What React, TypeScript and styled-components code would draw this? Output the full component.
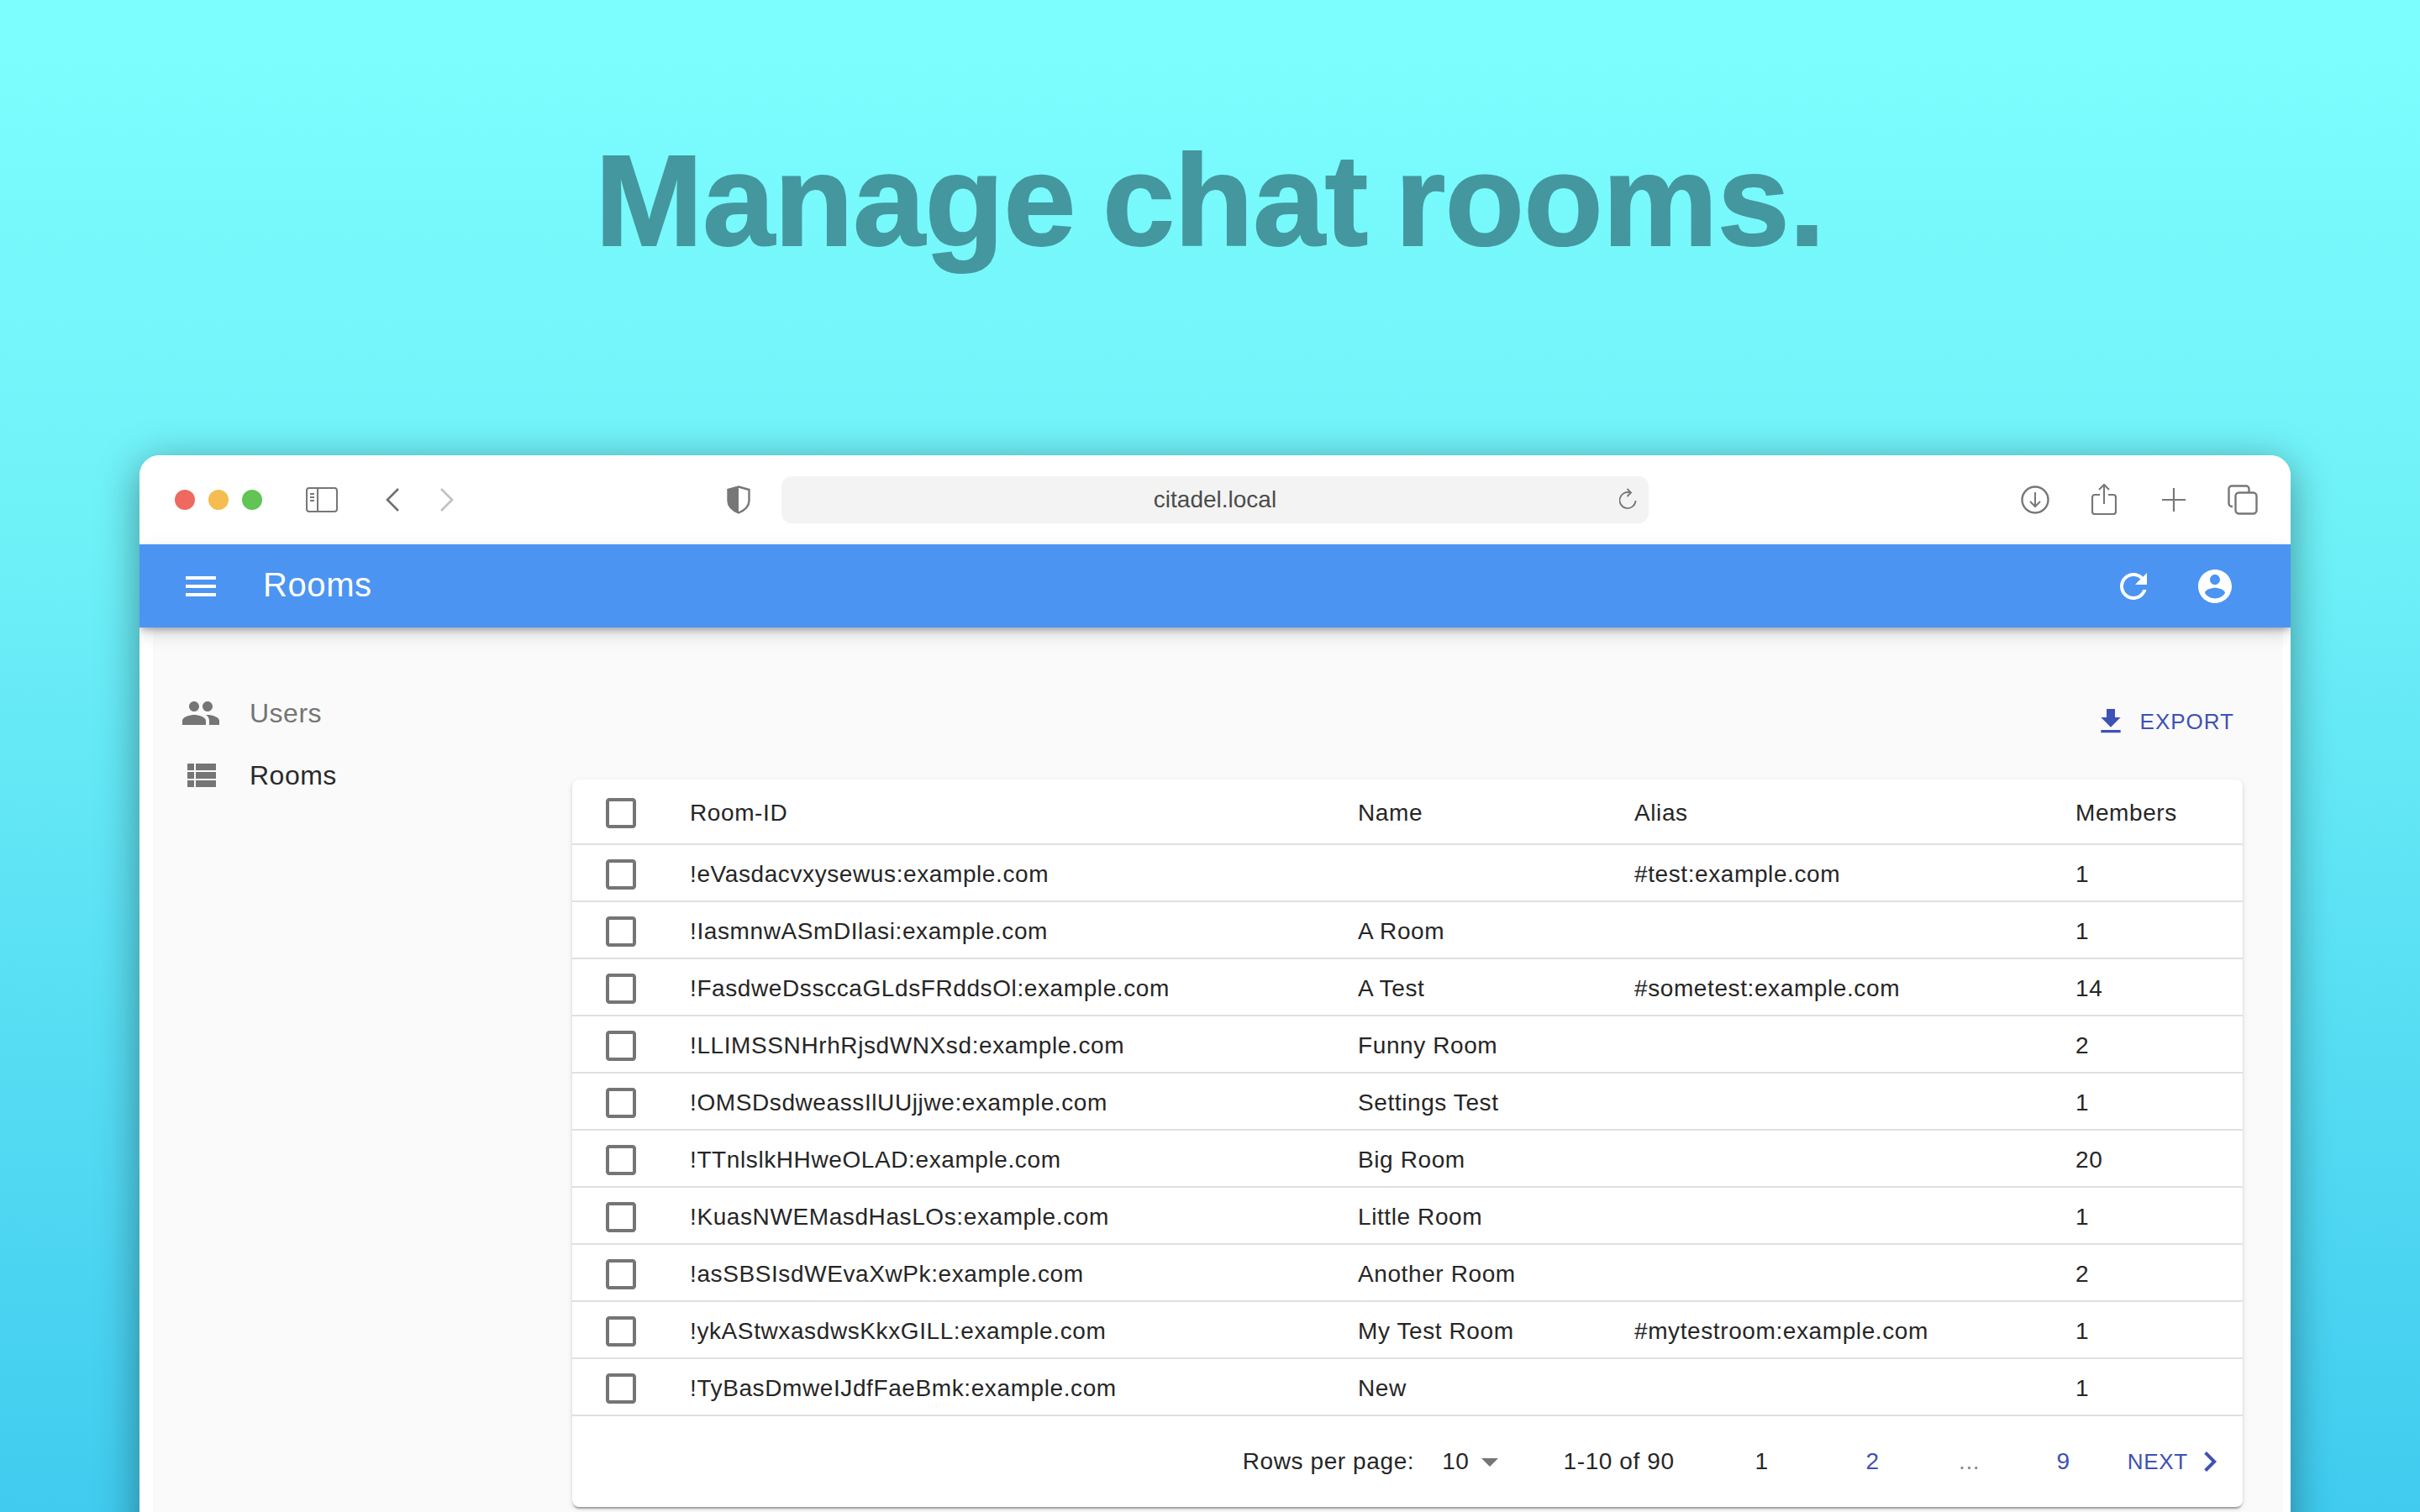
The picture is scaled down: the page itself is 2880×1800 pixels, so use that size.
import React from 'react';
import styled, { createGlobalStyle } from 'styled-components';

const rooms = [
	['!eVasdacvxysewus:example.com', '', '#test:example.com', '1'],
	['!IasmnwASmDIlasi:example.com', 'A Room', '', '1'],
	['!FasdweDssccaGLdsFRddsOl:example.com', 'A Test', '#sometest:example.com', '14'],
	['!LLIMSSNHrhRjsdWNXsd:example.com', 'Funny Room', '', '2'],
	['!OMSDsdweassIlUUjjwe:example.com', 'Settings Test', '', '1'],
	['!TTnlslkHHweOLAD:example.com', 'Big Room', '', '20'],
	['!KuasNWEMasdHasLOs:example.com', 'Little Room', '', '1'],
	['!asSBSIsdWEvaXwPk:example.com', 'Another Room', '', '2'],
	['!ykAStwxasdwsKkxGILL:example.com', 'My Test Room', '#mytestroom:example.com', '1'],
	['!TyBasDmweIJdfFaeBmk:example.com', 'New', '', '1'],
];

const paths = {
	menu: 'M3 18h18v-2H3v2zm0-5h18v-2H3v2zm0-7v2h18V6H3z',
	people:
		'M16 11c1.66 0 2.99-1.34 2.99-3S17.66 5 16 5c-1.66 0-3 1.34-3 3s1.34 3 3 3zm-8 0c1.66 0 2.99-1.34 2.99-3S9.66 5 8 5C6.34 5 5 6.34 5 8s1.34 3 3 3zm0 2c-2.33 0-7 1.17-7 3.5V19h14v-2.5c0-2.33-4.67-3.5-7-3.5zm8 0c-.29 0-.62.02-.97.05 1.16.84 1.97 1.97 1.97 3.45V19h6v-2.5c0-2.33-4.67-3.5-7-3.5z',
	list: 'M4 14h4v-4H4v4zm0 5h4v-4H4v4zM4 9h4V5H4v4zm5 5h12v-4H9v4zm0 5h12v-4H9v4zM9 5v4h12V5H9z',
	getApp: 'M19 9h-4V3H9v6H5l7 7 7-7zM5 18v2h14v-2H5z',
	refresh:
		'M17.65 6.35C16.2 4.9 14.21 4 12 4c-4.42 0-7.99 3.58-7.99 8s3.57 8 7.99 8c3.73 0 6.84-2.55 7.73-6h-2.08c-.82 2.33-3.04 4-5.65 4-3.31 0-6-2.69-6-6s2.69-6 6-6c1.66 0 3.14.69 4.22 1.78L13 11h7V4l-2.35 2.35z',
	account:
		'M12 2C6.48 2 2 6.48 2 12s4.48 10 10 10 10-4.48 10-10S17.52 2 12 2zm0 3c1.66 0 3 1.34 3 3s-1.34 3-3 3-3-1.34-3-3 1.34-3 3-3zm0 14.2c-2.5 0-4.71-1.28-6-3.22.03-1.99 4-3.08 6-3.08 1.99 0 5.97 1.09 6 3.08-1.29 1.94-3.5 3.22-6 3.22z',
	box: 'M19 5v14H5V5h14m0-2H5c-1.1 0-2 .9-2 2v14c0 1.1.9 2 2 2h14c1.1 0 2-.9 2-2V5c0-1.1-.9-2-2-2z',
	chevron: 'M10 6L8.59 7.41 13.17 12l-4.58 4.59L10 18l6-6z',
	drop: 'M7 10l5 5 5-5z',
};

const Icon = ({ d, size = 48, color }: { d: string; size?: number; color: string }) => (
	<svg width={size} height={size} viewBox='0 0 24 24' fill={color} style={{ flex: 'none' }}>
		<path d={d} />
	</svg>
);

const App = () => {
	return (
		<Page>
			<GlobalStyle />
			<Hero>Manage chat rooms.</Hero>
			<BrowserWindow>
				<Toolbar>
					<Lights>
						<Light $color='#ee6a5f' />
						<Light $color='#f5bd4f' />
						<Light $color='#61c454' />
					</Lights>
					<SidebarGlyph width='38' height='30' viewBox='0 0 38 30' fill='none'>
						<rect x='1' y='1' width='36' height='28' rx='3' stroke='#777' strokeWidth='2' />
						<path d='M14 1v28' stroke='#777' strokeWidth='2' />
						<path d='M5 8h5M5 12h5M5 16h5' stroke='#777' strokeWidth='2' />
					</SidebarGlyph>
					<BackGlyph width='18' height='30' viewBox='0 0 18 30' fill='none'>
						<path d='M16 2L3 15l13 13' stroke='#6f6f6f' strokeWidth='2.6' />
					</BackGlyph>
					<ForwardGlyph width='18' height='30' viewBox='0 0 18 30' fill='none'>
						<path d='M2 2l13 13L2 28' stroke='#c0c0c0' strokeWidth='2.6' />
					</ForwardGlyph>
					<ShieldGlyph width='28' height='34' viewBox='0 0 28 34' fill='none'>
						<path
							d='M14 1.5L26.5 5v13c0 7-5.5 11.5-12.5 14.5C7 29.5 1.5 25 1.5 18V5z'
							stroke='#777'
							strokeWidth='2.4'
							fill='#fff'
						/>
						<path d='M14 1.5L1.5 5v13c0 7 5.5 11.5 12.5 14.5z' fill='#777' />
					</ShieldGlyph>
					<AddressBar>
						citadel.local
						<ReloadGlyph width='22' height='28' viewBox='0 0 22 28' fill='none'>
							<path d='M13 5.5A9.5 9.5 0 1 0 19.5 15' stroke='#777' strokeWidth='1.8' />
							<path d='M9.5 1L14 5.5 9.5 10' stroke='#777' strokeWidth='1.8' />
						</ReloadGlyph>
					</AddressBar>
					<ToolbarActions>
						<svg width='34' height='34' viewBox='0 0 34 34' fill='none'>
							<circle cx='17' cy='17' r='15.5' stroke='#777' strokeWidth='2.4' />
							<path d='M17 8v17M11 19l6 6 6-6' stroke='#777' strokeWidth='2' />
						</svg>
						<ShareGlyph width='30' height='38' viewBox='0 0 30 38' fill='none'>
							<path
								d='M10 14H4a3 3 0 0 0-3 3v17a3 3 0 0 0 3 3h22a3 3 0 0 0 3-3V17a3 3 0 0 0-3-3h-6'
								stroke='#777'
								strokeWidth='2.2'
							/>
							<path d='M15 25V2M9 8l6-6 6 6' stroke='#777' strokeWidth='2' />
						</ShareGlyph>
						<PlusGlyph width='28' height='28' viewBox='0 0 28 28' fill='none'>
							<path d='M14 0v28M0 14h28' stroke='#777' strokeWidth='2.2' />
						</PlusGlyph>
						<svg width='36' height='36' viewBox='0 0 36 36' fill='none'>
							<path
								d='M6 26H5a3.5 3.5 0 0 1-3.5-3.5V5A3.5 3.5 0 0 1 5 1.5h17A3.5 3.5 0 0 1 25.5 5v4'
								stroke='#777'
								strokeWidth='2.4'
							/>
							<rect x='9.5' y='9.5' width='25' height='25' rx='4' stroke='#777' strokeWidth='2.4' />
						</svg>
					</ToolbarActions>
				</Toolbar>
				<AppBar>
					<Icon d={paths.menu} color='#fff' />
					<AppTitle>Rooms</AppTitle>
					<AppActions>
						<Icon d={paths.refresh} color='#fff' />
						<Icon d={paths.account} color='#fff' />
					</AppActions>
				</AppBar>
				<Content>
					<ContentInner>
						<Sidebar>
							<MenuItem $active={false}>
								<Icon d={paths.people} color='#757575' />
								Users
							</MenuItem>
							<MenuItem $active>
								<Icon d={paths.list} color='#757575' />
								Rooms
							</MenuItem>
						</Sidebar>
						<Main>
							<Actions>
								<ExportButton>
									<Icon d={paths.getApp} size={40} color='#3f51b5' />
									EXPORT
								</ExportButton>
							</Actions>
							<Paper>
								<HeadRow>
									<Icon d={paths.box} color='#757575' />
									<span>Room-ID</span>
									<span>Name</span>
									<span>Alias</span>
									<span>Members</span>
								</HeadRow>
								{rooms.map(([id, name, alias, members]) => (
									<Row key={id}>
										<Icon d={paths.box} color='#757575' />
										<span>{id}</span>
										<span>{name}</span>
										<span>{alias}</span>
										<span>{members}</span>
									</Row>
								))}
								<Footer>
									<span>Rows per page:</span>
									<RowsSelect>
										10
										<Icon d={paths.drop} color='#757575' />
									</RowsSelect>
									<RangeLabel>1-10 of 90</RangeLabel>
									<PageNumber $width={132}>1</PageNumber>
									<PageNumber $width={132} $link>
										2
									</PageNumber>
									<PageEllipsis>...</PageEllipsis>
									<PageNumber $width={126} $link>
										9
									</PageNumber>
									<NextLink>
										NEXT
										<Icon d={paths.chevron} color='#3f51b5' />
									</NextLink>
								</Footer>
							</Paper>
						</Main>
					</ContentInner>
				</Content>
			</BrowserWindow>
		</Page>
	);
};

export default App;

const GlobalStyle = createGlobalStyle`
	html, body {
		margin: 0;
		padding: 0;
		height: 1800px;
		overflow: hidden;
	}
	body {
		font-family: 'Liberation Sans', Arial, sans-serif;
	}
`;

const Page = styled.div`
	width: 2880px;
	height: 1800px;
	overflow: hidden;
	background: linear-gradient(180deg, #7dfefe 0%, #6ff1f8 35%, #40cbef 100%);
`;

const Hero = styled.h1`
	margin: 0;
	height: 542px;
	box-sizing: border-box;
	padding-top: 150px;
	text-align: center;
	font-size: 154px;
	line-height: 178px;
	font-weight: 700;
	letter-spacing: -0.3px;
	word-spacing: -10px;
	-webkit-text-stroke: 2px #45979f;
	color: #45979f;
`;

const BrowserWindow = styled.div`
	width: 2560px;
	height: 1400px;
	margin-left: 166px;
	border-radius: 24px 24px 0 0;
	background: #fff;
	overflow: hidden;
	box-shadow: 0 10px 50px rgba(0, 0, 0, 0.4);
`;

const Toolbar = styled.div`
	height: 106px;
	display: flex;
	align-items: center;
	padding-left: 42px;
	box-sizing: border-box;
	background: #fff;
`;

const Lights = styled.div`
	display: flex;
	gap: 16px;
`;

const Light = styled.span<{ $color: string }>`
	width: 24px;
	height: 24px;
	border-radius: 50%;
	background: ${(p) => p.$color};
`;

const SidebarGlyph = styled.svg`
	margin-left: 52px;
`;

const BackGlyph = styled.svg`
	margin-left: 56px;
`;

const ForwardGlyph = styled.svg`
	margin-left: 47px;
`;

const ShieldGlyph = styled.svg`
	margin-left: 324px;
`;

const AddressBar = styled.div`
	position: relative;
	margin-left: 37px;
	width: 1032px;
	height: 56px;
	border-radius: 12px;
	background: #f3f3f3;
	display: flex;
	align-items: center;
	justify-content: center;
	font-size: 28px;
	color: #4c4c4c;
`;

const ReloadGlyph = styled.svg`
	position: absolute;
	right: 13px;
	top: 14px;
`;

const ToolbarActions = styled.div`
	margin-left: 443px;
	display: flex;
	align-items: center;
	gap: 50px;
`;

const ShareGlyph = styled.svg`
	margin-top: -3px;
`;

const PlusGlyph = styled.svg`
	margin: 0 0 0 4px;
`;

const AppBar = styled.div`
	position: relative;
	z-index: 1;
	height: 99px;
	display: flex;
	align-items: center;
	padding: 0 66px 0 49px;
	background: #4c94f2;
	box-shadow: 0 4px 8px -2px rgba(0, 0, 0, 0.3), 0 8px 20px rgba(0, 0, 0, 0.14);
`;

const AppTitle = styled.div`
	margin: -3px 0 0 50px;
	font-size: 40px;
	letter-spacing: 0.6px;
	color: #fff;
`;

const AppActions = styled.div`
	margin-left: auto;
	display: flex;
	gap: 49px;
`;

const Content = styled.div`
	height: 1195px;
	padding: 0 9px 0 16px;
	background: #fff;
`;

const ContentInner = styled.div`
	height: 100%;
	display: flex;
	background: #fafafa;
`;

const Sidebar = styled.div`
	flex: 0 0 499px;
	padding: 65px 0 0 33px;
	box-sizing: border-box;
`;

const MenuItem = styled.div<{ $active: boolean }>`
	height: 74px;
	display: flex;
	align-items: center;
	gap: 34px;
	font-size: 32px;
	letter-spacing: 0.5px;
	color: ${(p) => (p.$active ? '#2a2a2a' : '#757575')};
`;

const Main = styled.div`
	flex: 1;
	padding-right: 48px;
`;

const Actions = styled.div`
	height: 181px;
	box-sizing: border-box;
	padding: 88px 10px 0 0;
	display: flex;
	justify-content: flex-end;
	align-items: flex-start;
`;

const ExportButton = styled.div`
	display: flex;
	align-items: center;
	gap: 15px;
	height: 48px;
	font-size: 26px;
	letter-spacing: 1px;
	color: #3f51b5;
`;

const Paper = styled.div`
	background: #fff;
	border-radius: 8px;
	box-shadow: 0 4px 2px -2px rgba(0, 0, 0, 0.2), 0 2px 2px 0 rgba(0, 0, 0, 0.14),
		0 2px 6px 0 rgba(0, 0, 0, 0.12);
`;

const Row = styled.div`
	height: 68px;
	box-sizing: border-box;
	padding-top: 3px;
	display: grid;
	grid-template-columns: 140px 795px 329px 525px 1fr;
	align-items: center;
	border-bottom: 2px solid #e0e0e0;
	font-size: 28px;
	letter-spacing: 0.6px;
	color: #262626;

	& > svg {
		margin-left: 34px;
	}
`;

const HeadRow = styled(Row)`
	height: 78px;
`;

const Footer = styled.div`
	height: 108px;
	display: flex;
	align-items: center;
	justify-content: flex-end;
	padding-right: 15px;
	font-size: 28px;
	letter-spacing: 0.6px;
	color: #262626;
`;

const RowsSelect = styled.div`
	display: flex;
	align-items: center;
	margin-left: 33px;
`;

const RangeLabel = styled.span`
	margin: 0 38px 0 64px;
`;

const PageNumber = styled.span<{ $width: number; $link?: boolean }>`
	width: ${(p) => p.$width}px;
	text-align: center;
	color: ${(p) => (p.$link ? '#3f51b5' : 'inherit')};
`;

const PageEllipsis = styled.span`
	width: 98px;
	text-align: center;
	color: #8a8a8a;
`;

const NextLink = styled.div`
	display: flex;
	align-items: center;
	gap: 2px;
	margin-left: 13px;
	font-size: 26px;
	letter-spacing: 0.75px;
	color: #3f51b5;
`;
